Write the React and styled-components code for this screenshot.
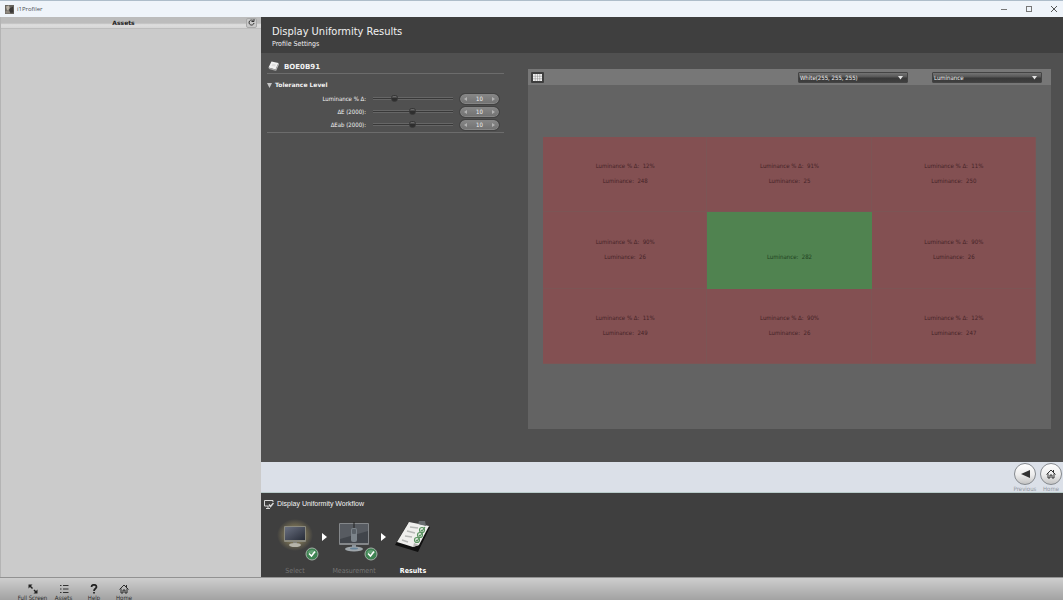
import React, { useState } from "react";
import styled, { createGlobalStyle } from "styled-components";

const GlobalStyle = createGlobalStyle`
  * { box-sizing: border-box; }
  body {
    margin: 0;
    background: #505050;
    font-family: "DejaVu Sans Condensed", "DejaVu Sans", sans-serif;
    font-size: 6px;
    line-height: 10px;
  }
  button, input, select { font: inherit; color: inherit; margin: 0; padding: 0; border: 0; }
  button { background: none; display: flex; align-items: center; justify-content: center; }
  h1, h2, h3, p { margin: 0; }
  svg { display: block; flex: none; }
`;

const Window = styled.div`
  display: flex;
  flex-direction: column;
  min-height: 100vh;
`;

const TitleBar = styled.header`
  display: flex;
  align-items: center;
  height: 17px;
  padding: 0 4px 0 5px;
  gap: 3px;
  background: #eff4fa;
  border-top: 1px solid #aebdca;
  color: #4c5054;
`;

const AppName = styled.span`
  flex: 1;
  font-family: "Open Sans", sans-serif;
`;

const WindowButtons = styled.div`
  display: flex;
  gap: 15px;
`;

const WindowButton = styled.button`
  width: 10px;
  height: 10px;
`;

const Body = styled.div`
  flex: 1;
  display: flex;
`;

const Sidebar = styled.aside`
  flex: 0 0 261px;
  background: #cbcbcb;
  border-left: 1px solid #b4b4b4;
`;

const SidebarHeader = styled.div`
  display: flex;
  align-items: center;
  height: 12px;
  padding: 0 4px 0 0;
  background: linear-gradient(#bcbcbc 0 55%, #dedede 70%, #d6d6d6);
  border-bottom: 1px solid #bdbdbd;
  color: #222;
`;

const SidebarTitle = styled.h2`
  flex: 1;
  font-family: "DejaVu Sans", sans-serif;
  font-size: 6px;
  line-height: 12px;
  text-align: center;
`;

const RefreshButton = styled.button`
  width: 11px;
  height: 10px;
  background: #c9c9c9;
  border: 1px solid #a9a9a9;
  border-radius: 2px;
`;

const Main = styled.main`
  flex: 1;
  min-width: 0;
  display: flex;
  flex-direction: column;
  background: #505050;
  color: #f2f2f2;
`;

const PageHeader = styled.div`
  height: 36px;
  padding: 7px 11px;
  background: #3f3f3f;
`;

const PageTitle = styled.h1`
  font-size: 11px;
  line-height: 15px;
  font-weight: 400;
`;

const PageSubtitle = styled.p`
  font-size: 7px;
  line-height: 10px;
`;

const Content = styled.div`
  flex: 1;
  display: flex;
  align-items: flex-start;
  gap: 24px;
  padding: 7px 12px 33px 6px;
`;

const Settings = styled.section`
  flex: 0 0 237px;
`;

const DeviceRow = styled.div`
  display: flex;
  align-items: center;
  gap: 4px;
  height: 14px;
  border-bottom: 1px solid #6c6c6c;
`;

const DeviceName = styled.h2`
  font-family: "DejaVu Sans", sans-serif;
  font-size: 7px;
  line-height: 12px;
`;

const GroupToggle = styled.button`
  height: 10px;
  margin: 6px 0 2px;
  gap: 3px;
  && {
    font-family: "DejaVu Sans", sans-serif;
    font-weight: 700;
  }
`;

const ToleranceGroup = styled.div`
  padding-bottom: 1px;
  border-bottom: 1px solid #6c6c6c;
`;

const ToleranceRow = styled.div`
  display: grid;
  grid-template-columns: 99px 80px 39px;
  column-gap: 7px;
  align-items: center;
  height: 13px;
`;

const ToleranceLabel = styled.label`
  text-align: right;
  white-space: nowrap;
`;

const Slider = styled.input`
  appearance: none;
  width: 100%;
  height: 10px;
  background: linear-gradient(#383838, #383838) center / 100% 1px no-repeat,
    linear-gradient(#666, #666) center / 100% 3px no-repeat;
  &::-webkit-slider-thumb {
    appearance: none;
    width: 7px;
    height: 7px;
    border-radius: 3px 3px 4px 4px;
    background: linear-gradient(#777, #2e2e2e 50%);
    border: 1px solid #363636;
  }
`;

const Stepper = styled.div`
  display: flex;
  align-items: center;
  height: 10px;
  padding: 0 2px;
  border-radius: 5px;
  background: linear-gradient(#858585, #737373);
  border: 1px solid #858585;
  outline: 1px solid #424242;
`;

const StepButton = styled.button`
  width: 5px;
  height: 8px;
  color: #b2b2b2;
`;

const StepValue = styled.input`
  flex: 1;
  min-width: 0;
  height: 8px;
  background: none;
  text-align: center;
`;

const ResultsPanel = styled.section`
  flex: 1;
  min-width: 0;
  margin-top: 9px;
  background: #636363;
`;

const ResultsToolbar = styled.div`
  display: flex;
  align-items: center;
  gap: 24px;
  height: 16px;
  padding: 0 9px 0 3px;
  background: #777;
`;

const GridButton = styled.button`
  width: 13px;
  height: 11px;
  margin-right: auto;
  background: #3e3e3e;
  border-radius: 1px;
`;

const SelectBox = styled.div`
  position: relative;
  width: 110px;
  height: 11px;
  background: linear-gradient(#747474, #555 45%, #393939 55%, #3f3f3f);
  border: 1px solid #444;
  border-radius: 1px;
  svg {
    position: absolute;
    right: 4px;
    top: 3px;
    pointer-events: none;
  }
`;

const Select = styled.select`
  appearance: none;
  display: block;
  width: 100%;
  height: 9px;
  padding-left: 1px;
  background: none;
  line-height: 9px;
  option { background: #444; }
`;

const CellGrid = styled.div`
  display: grid;
  grid-template-columns: repeat(3, 1fr);
  grid-template-rows: 75px 77px 75px;
  margin: 0 15px;
  padding: 52px 0 65px;
`;

const Cell = styled.div`
  display: flex;
  flex-direction: column;
  align-items: center;
  justify-content: center;
  padding-bottom: 4px;
  background: ${({ $pass }) => ($pass ? "#508350" : "#835052")};
  box-shadow: ${({ $pass }) => ($pass ? "none" : "inset -1px -1px 0 #7c5555")};
  color: ${({ $pass }) => ($pass ? "#21421f" : "#432327")};
`;

const Reading = styled.p`
  min-height: 15px;
  line-height: 15px;
  white-space: pre;
`;

const NavStrip = styled.nav`
  display: flex;
  justify-content: flex-end;
  gap: 2px;
  height: 31px;
  padding: 1px 0 0;
  background: #dbe0e8;
  border-bottom: 1px solid #b9cbca;
`;

const NavButton = styled.button`
  width: 24px;
  flex-direction: column;
  justify-content: flex-start;
  color: #92979e;
  && { line-height: 7px; }
`;

const NavDisc = styled.span`
  display: flex;
  align-items: center;
  justify-content: center;
  flex: none;
  width: 22px;
  height: 22px;
  border-radius: 50%;
  border: 1px solid #85898e;
  background: linear-gradient(#ffffff, #ececec 55%, #c4c4c4);
  color: #333;
`;

const Workflow = styled.section`
  height: 84px;
  padding: 6px 3px 0;
  background: #3f3f3f;
`;

const WorkflowTitle = styled.h3`
  display: flex;
  align-items: center;
  gap: 3px;
  font-family: "Liberation Sans", sans-serif;
  font-size: 7px;
  line-height: 10px;
  font-weight: 400;
`;

const Steps = styled.div`
  display: flex;
  margin-top: 10px;
  padding-left: 3px;
`;

const Step = styled.button`
  position: relative;
  width: 56px;
  height: 57px;
  flex-direction: column;
  justify-content: space-between;
  color: ${({ $active }) => ($active ? "#ffffff" : "#747474")};
  && {
    font-size: 7px;
    font-weight: ${({ $active }) => ($active ? 700 : 400)};
  }
`;

const StepArrow = styled.span`
  display: flex;
  justify-content: center;
  width: 3px;
  padding-top: 14px;
`;

const DoneBadge = styled.svg`
  position: absolute;
  left: 38px;
  top: 28px;
`;

const Footer = styled.footer`
  display: flex;
  align-items: flex-start;
  height: 23px;
  padding: 6px 0 0 17px;
  background: linear-gradient(#cecece, #a2a2a2);
  border-top: 1px solid #929292;
`;

const FooterButton = styled.button`
  width: ${({ $wide }) => ($wide ? 31 : 30)}px;
  height: 16px;
  flex: none;
  flex-direction: column;
  color: #2c2c2c;
  white-space: nowrap;
  && { line-height: 7px; }
`;

const HomeIcon = ({ size = 10 }) => (
  <svg width={size} height={size} viewBox="0 0 20 20" fill="none" stroke="currentColor" strokeWidth="2">
    <path d="M1 11 L10 2 L19 11" />
    <path d="M4 9 V18 H8 V12 H12 V18 H16 V9 M15 6 V2" />
  </svg>
);

const ProfilerIcon = () => (
  <svg width="9" height="9" viewBox="0 0 18 18">
    <rect width="18" height="18" fill="#68655f" />
    <path d="M2 3 L8 1 L10 8 L4 11 Z" fill="#b9b2a6" />
    <path d="M9 7 L16 3 L17 15 L7 16 Z" fill="#3b3938" />
    <path d="M1 12 L8 10 L11 17 H1 Z" fill="#8e8880" />
  </svg>
);

const RefreshIcon = () => (
  <svg width="7" height="7" viewBox="0 0 14 14" fill="none" stroke="#333" strokeWidth="2">
    <path d="M11 4 A5 5 0 1 0 12 8" />
    <path d="M7 5 H12 V0" />
  </svg>
);

const DeviceIcon = () => (
  <svg width="13" height="11" viewBox="0 0 26 22">
    <path d="M9 1 L23 4 L17 17 L3 13 Z" fill="#f1f1f1" />
    <path d="M3 13 L17 17 L18 20 L4 16 Z" fill="#a5a5a5" />
    <path d="M23 4 L24 7 L18 20 L17 17 Z" fill="#b9b9b9" />
    <path d="M11 5 L18 7 L16 11 L9 10 Z" fill="#dedede" />
  </svg>
);

const ChevronDown = () => (
  <svg width="5" height="4" viewBox="0 0 5 4"><path d="M0 0 H5 L2.5 3.5 Z" fill="#e2e2e2" /></svg>
);

const TableIcon = () => (
  <svg width="9" height="7" viewBox="0 0 18 14">
    <rect width="18" height="14" fill="#f2f2f2" />
    <path d="M4.5 0 V14 M9 0 V14 M13.5 0 V14 M0 4.5 H18 M0 9.5 H18" stroke="#888" />
  </svg>
);

const WorkflowIcon = () => (
  <svg width="10" height="9" viewBox="0 0 20 18" fill="none" stroke="#d8d8d8" strokeWidth="2">
    <path d="M9 12 H1 V1 H18 V4" />
    <path d="M4 17 H12 M8 12 V17" />
    <path d="M10 9 L13 13 L19 6" strokeWidth="3" />
  </svg>
);

const SelectIcon = () => (
  <svg width="38" height="38" viewBox="0 0 38 38">
    <defs>
      <radialGradient id="glow">
        <stop offset="0.5" stopColor="#b3a36a" stopOpacity="0.5" />
        <stop offset="1" stopColor="#b3a36a" stopOpacity="0" />
      </radialGradient>
      <linearGradient id="screen" x2="1" y2="1">
        <stop offset="0" stopColor="#6a7080" />
        <stop offset="1" stopColor="#272c38" />
      </linearGradient>
    </defs>
    <ellipse cx="19" cy="16" rx="18" ry="16" fill="url(#glow)" />
    <rect x="8" y="7" width="22" height="16" rx="1" fill="#8b8a7e" />
    <rect x="9" y="8" width="20" height="13" fill="url(#screen)" />
    <path d="M17 23 H21 V26 H17 Z" fill="#85847e" />
    <ellipse cx="19" cy="26" rx="6" ry="2" fill="#b6b4a9" />
  </svg>
);

const MeasurementIcon = () => (
  <svg width="38" height="38" viewBox="0 0 38 38">
    <rect x="4" y="4" width="30" height="22" rx="1" fill="#84878a" />
    <rect x="5" y="5" width="28" height="19" fill="#41454b" />
    <path d="M5 5 H33 V12 L5 20 Z" fill="#575b61" />
    <path d="M19 3 V10" stroke="#222" />
    <rect x="16" y="9" width="6" height="14" rx="2" fill="#7b838a" />
    <rect x="17" y="10" width="4" height="5" rx="1" fill="#5a6168" />
    <path d="M17 26 H21 V29 H17 Z" fill="#889198" />
    <ellipse cx="19" cy="30" rx="9" ry="2.500" fill="#9fa6ab" />
    <ellipse cx="19" cy="29.500" rx="4" ry="1" fill="#668399" />
  </svg>
);

const ResultsIcon = () => (
  <svg width="38" height="38" viewBox="0 0 38 38">
    <path d="M14 4 L36 8 L24 33 L1 26 Z" fill="#111" />
    <path d="M15 3 L35 7 L25 26 L19 28 L3 23 Z" fill="#efefed" />
    <path d="M19 28 L20 24 L25 26 Z" fill="#b7b7b5" />
    <path d="M24 5 L25 2 H31 L32 7 Z" fill="#696d70" />
    <path d="M16 8 L24 9 M13 12 L21 14 M11 17 L18 18 M8 21 L14 23" stroke="#b6b8b6" strokeWidth="1.500" />
    <g fill="none" stroke="#5a9461" strokeWidth="1.200">
      <circle cx="28" cy="11" r="2.500" /><path d="M27 11 L28 12 L31 8" />
      <circle cx="26" cy="16" r="2.500" /><path d="M25 16 L26 17 L29 13" />
      <circle cx="23" cy="21" r="2.500" /><path d="M22 21 L23 22 L26 18" />
    </g>
  </svg>
);

const Done = () => (
  <DoneBadge width="14" height="14" viewBox="0 0 28 28">
    <circle cx="14" cy="14" r="12" fill="#3e8352" stroke="#a2afa6" strokeWidth="2" />
    <path d="M5 11 A10 9 0 0 1 23 11 Q14 15 5 11 Z" fill="#62a174" />
    <path d="M8 13 L13 18 L20 9" fill="none" stroke="#fff" strokeWidth="3" />
  </DoneBadge>
);

const tolerances = [
  { id: "lum", label: "Luminance % Δ:", position: 24 },
  { id: "de", label: "ΔE (2000):", position: 49 },
  { id: "deab", label: "ΔEab (2000):", position: 49 },
];

const cells = [
  ["12%", "248"], ["91%", "25"], ["11%", "250"],
  ["90%", "26"], [null, "282"], ["90%", "26"],
  ["11%", "249"], ["90%", "26"], ["12%", "247"],
];

const steps = [
  { label: "Select", Icon: SelectIcon, done: true },
  { label: "Measurement", Icon: MeasurementIcon, done: true },
  { label: "Results", Icon: ResultsIcon, active: true },
];

function Tolerance({ id, label, position }) {
  const [level, setLevel] = useState(position);
  const [value, setValue] = useState(10);
  return (
    <ToleranceRow>
      <ToleranceLabel htmlFor={id}>{label}</ToleranceLabel>
      <Slider id={id} type="range" min="0" max="100" value={level} onChange={(e) => setLevel(+e.target.value)} />
      <Stepper>
        <StepButton aria-label="Decrease" onClick={() => setValue(value - 1)}>
          <svg width="3" height="4" viewBox="0 0 3 4"><path d="M3 0 V4 L0 2 Z" fill="currentColor" /></svg>
        </StepButton>
        <StepValue aria-label={label} value={value} onChange={(e) => setValue(+e.target.value || 0)} />
        <StepButton aria-label="Increase" onClick={() => setValue(value + 1)}>
          <svg width="3" height="4" viewBox="0 0 3 4"><path d="M0 0 V4 L3 2 Z" fill="currentColor" /></svg>
        </StepButton>
      </Stepper>
    </ToleranceRow>
  );
}

export default function App() {
  return (
    <Window>
      <GlobalStyle />
      <TitleBar>
        <ProfilerIcon />
        <AppName>i1Profiler</AppName>
        <WindowButtons>
          <WindowButton aria-label="Minimize">
            <svg width="6" height="6" viewBox="0 0 6 6"><path d="M0 3.500 H6" stroke="#777" /></svg>
          </WindowButton>
          <WindowButton aria-label="Maximize">
            <svg width="6" height="6" viewBox="0 0 6 6"><rect x="0.500" y="0.500" width="5" height="5" fill="none" stroke="#777" /></svg>
          </WindowButton>
          <WindowButton aria-label="Close">
            <svg width="6" height="6" viewBox="0 0 6 6"><path d="M0 0 L6 6 M6 0 L0 6" stroke="#555" /></svg>
          </WindowButton>
        </WindowButtons>
      </TitleBar>

      <Body>
        <Sidebar>
          <SidebarHeader>
            <SidebarTitle>Assets</SidebarTitle>
            <RefreshButton aria-label="Refresh"><RefreshIcon /></RefreshButton>
          </SidebarHeader>
        </Sidebar>

        <Main>
          <PageHeader>
            <PageTitle>Display Uniformity Results</PageTitle>
            <PageSubtitle>Profile Settings</PageSubtitle>
          </PageHeader>

          <Content>
            <Settings>
              <DeviceRow>
                <DeviceIcon />
                <DeviceName>BOE0B91</DeviceName>
              </DeviceRow>
              <GroupToggle>
                <svg width="5" height="5" viewBox="0 0 5 5"><path d="M0 0 H5 L2.500 5 Z" fill="#c4c4c4" /></svg>
                Tolerance Level
              </GroupToggle>
              <ToleranceGroup>
                {tolerances.map((t) => <Tolerance key={t.id} {...t} />)}
              </ToleranceGroup>
            </Settings>

            <ResultsPanel>
              <ResultsToolbar>
                <GridButton aria-label="Grid view"><TableIcon /></GridButton>
                <SelectBox>
                  <Select aria-label="Patch"><option>White(255, 255, 255)</option></Select>
                  <ChevronDown />
                </SelectBox>
                <SelectBox>
                  <Select aria-label="Metric"><option>Luminance</option></Select>
                  <ChevronDown />
                </SelectBox>
              </ResultsToolbar>
              <CellGrid>
                {cells.map(([delta, luminance], i) => (
                  <Cell key={i} $pass={delta === null}>
                    <Reading>{delta && `Luminance % Δ:  ${delta}`}</Reading>
                    <Reading>{`Luminance:  ${luminance}`}</Reading>
                  </Cell>
                ))}
              </CellGrid>
            </ResultsPanel>
          </Content>

          <NavStrip>
            <NavButton>
              <NavDisc>
                <svg width="9" height="8" viewBox="0 0 9 8"><path d="M9 0 V8 L0 4 Z" fill="currentColor" /></svg>
              </NavDisc>
              Previous
            </NavButton>
            <NavButton>
              <NavDisc><HomeIcon /></NavDisc>
              Home
            </NavButton>
          </NavStrip>

          <Workflow>
            <WorkflowTitle><WorkflowIcon />Display Uniformity Workflow</WorkflowTitle>
            <Steps>
              {steps.map(({ label, Icon, done, active }, i) => (
                <React.Fragment key={label}>
                  {i > 0 && (
                    <StepArrow>
                      <svg width="5" height="8" viewBox="0 0 5 8"><path d="M0 0 L5 4 L0 8 Z" fill="#fff" /></svg>
                    </StepArrow>
                  )}
                  <Step $active={active}>
                    <Icon />
                    {done && <Done />}
                    {label}
                  </Step>
                </React.Fragment>
              ))}
            </Steps>
          </Workflow>
        </Main>
      </Body>

      <Footer>
        <FooterButton $wide>
          <svg width="10" height="10" viewBox="0 0 20 20" fill="#222">
            <path d="M1 1 H9 L6 4 L10 8 L8 10 L4 6 L1 9 Z M19 19 H11 L14 16 L11 13 L13 11 L16 14 L19 11 Z" />
          </svg>
          Full Screen
        </FooterButton>
        <FooterButton $wide>
          <svg width="10" height="10" viewBox="0 0 20 20" stroke="#333" strokeWidth="2">
            <path d="M2 3 H5 M2 10 H5 M2 17 H5 M8 3 H19 M8 10 H19 M8 17 H19" />
          </svg>
          Assets
        </FooterButton>
        <FooterButton>
          <svg width="10" height="10" viewBox="0 0 20 20" fill="none" stroke="#222" strokeWidth="3.500">
            <path d="M5 6 C5 0 15 0 15 6 C15 9 10 9 10 14 M10 16 V19" />
          </svg>
          Help
        </FooterButton>
        <FooterButton>
          <HomeIcon />
          Home
        </FooterButton>
      </Footer>
    </Window>
  );
}
